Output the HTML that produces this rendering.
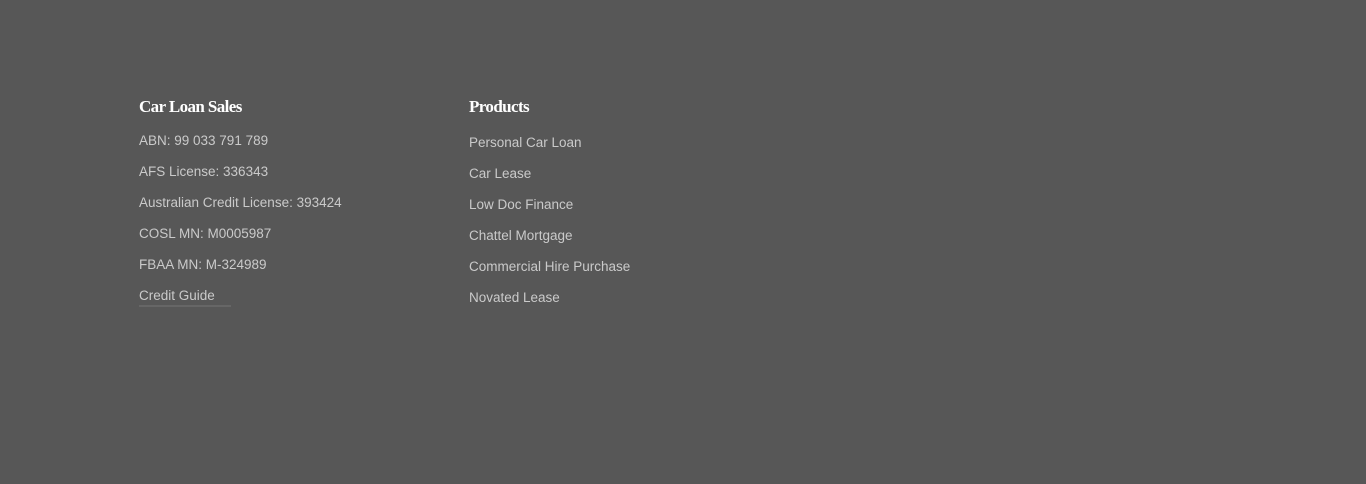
<!DOCTYPE html>
<html><head><meta charset="utf-8"><style>
html,body{margin:0;padding:0;}
body{width:1366px;height:484px;background:#575757;position:relative;overflow:hidden;font-family:"Liberation Sans",sans-serif;}
.col{position:absolute;top:96px;}
h3{margin:0;font-family:"Liberation Serif",serif;font-weight:bold;font-size:17px;color:#fff;letter-spacing:-0.6px;height:22px;line-height:22px;}
.t{position:absolute;left:0;font-size:13.5px;color:#cacaca;white-space:nowrap;line-height:16px;}
.u{border-bottom:2px solid #666;padding-bottom:1px;width:92px;}
</style></head><body>
<div class="col" style="left:139px;width:300px">
<h3>Car Loan Sales</h3>
<div class="t" style="top:37px">ABN: 99 033 791 789</div>
<div class="t" style="top:68px">AFS License: 336343</div>
<div class="t" style="top:99px">Australian Credit License: 393424</div>
<div class="t" style="top:130px">COSL MN: M0005987</div>
<div class="t" style="top:161px">FBAA MN: M-324989</div>
<div class="t u" style="top:192px">Credit Guide</div>
</div>
<div class="col" style="left:469px;width:300px">
<h3>Products</h3>
<div class="t" style="top:39px">Personal Car Loan</div>
<div class="t" style="top:70px">Car Lease</div>
<div class="t" style="top:101px">Low Doc Finance</div>
<div class="t" style="top:132px">Chattel Mortgage</div>
<div class="t" style="top:163px">Commercial Hire Purchase</div>
<div class="t" style="top:194px">Novated Lease</div>
</div>
</body></html>
